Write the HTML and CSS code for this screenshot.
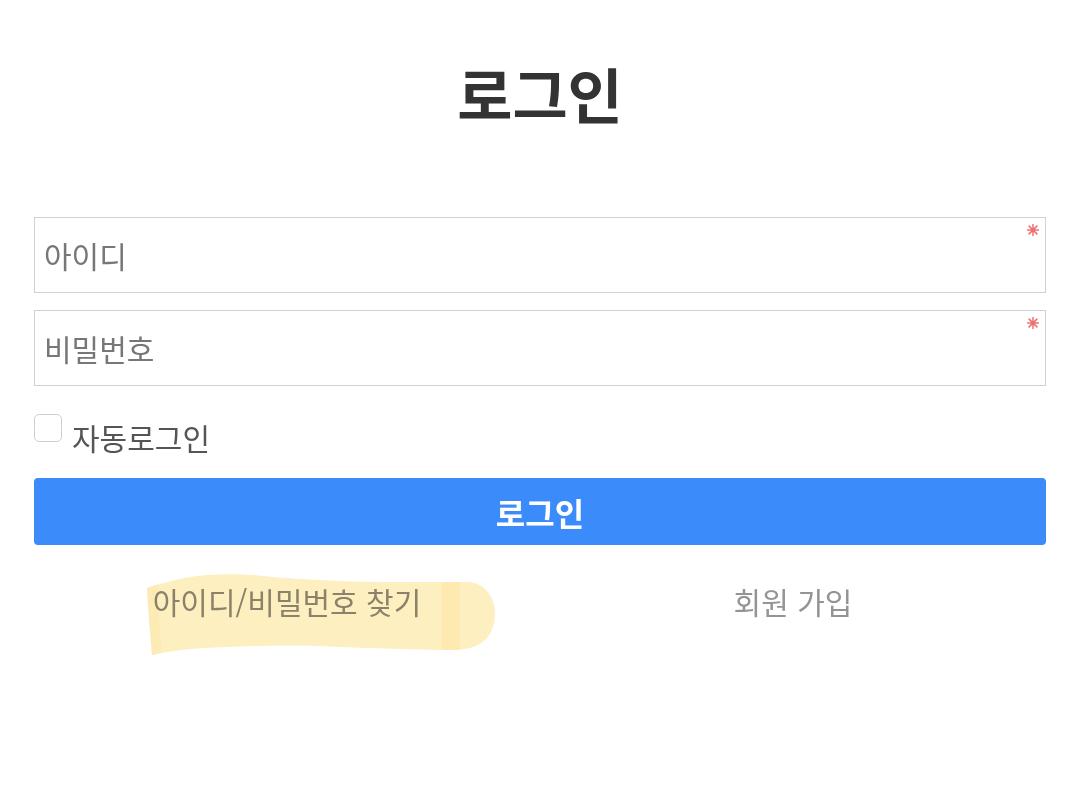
FILE: index.html
```html
<!DOCTYPE html>
<html lang="ko">
<head>
<meta charset="utf-8">
<title>로그인</title>
<link rel="stylesheet" href="styles.css">
</head>
<body>
<main class="login">
  <h1 class="login-title">로그인</h1>
  <form class="login-form">
    <div class="field">
      <input class="field-input" type="text" placeholder="아이디">
      <svg class="field-required" width="12" height="12" viewBox="0 0 12 12" aria-hidden="true">
        <path d="M6 0.5V11.5M0.5 6H11.5M2.1 2.1L9.9 9.9M9.9 2.1L2.1 9.9"/>
      </svg>
    </div>
    <div class="field">
      <input class="field-input" type="password" placeholder="비밀번호">
      <svg class="field-required" width="12" height="12" viewBox="0 0 12 12" aria-hidden="true">
        <path d="M6 0.5V11.5M0.5 6H11.5M2.1 2.1L9.9 9.9M9.9 2.1L2.1 9.9"/>
      </svg>
    </div>
    <label class="auto-login">
      <span class="checkbox"></span>
      <span class="auto-login-text">자동로그인</span>
    </label>
    <button class="login-button" type="button">로그인</button>
  </form>
  <nav class="links">
    <div class="link-cell">
      <svg class="highlight" width="360" height="90" viewBox="0 0 360 90" aria-hidden="true">
        <path class="hl-fill" d="M7 18 C20 14 40 7 67 5 C95 3 115 5 133 7 C160 9 200 12 250 12 C280 12 310 12 327 12 C345 12 355 28 355 43 C355 56 350 66 345 70 C335 79 325 80 300 80 C250 79 200 77 180 76 C140 75 110 76 67 78 C45 79 25 82 12 85 C10 60 8 40 7 18 Z"/>
        <path class="hl-fill2" d="M302 12 L320 12 L320 80 L302 80 Z"/>
        <path class="hl-fill3" d="M7 18 C10 16 14 15 18 14 C18 40 20 62 22 83 L12 85 C10 60 8 40 7 18 Z"/>
      </svg>
      <a class="link" href="#">아이디/비밀번호 찾기</a>
    </div>
    <div class="link-cell">
      <a class="link link-plain" href="#">회원 가입</a>
    </div>
  </nav>
</main>
</body>
</html>
```

FILE: styles.css
```css
* { box-sizing: border-box; }
html, body {
  margin: 0;
  padding: 0;
  background: #ffffff;
}
body {
  font-family: "Noto Sans CJK KR", "Noto Sans", sans-serif;
  width: 1080px;
  height: 796px;
  overflow: hidden;
}
.login {
  padding: 0 34px;
}
.login-title {
  margin: 0;
  padding-top: 49px;
  height: 217px;
  text-align: center;
  font-size: 60px;
  line-height: 88px;
  font-weight: 700;
  color: #333333;
}
.login-form {
  display: flex;
  flex-direction: column;
}
.field {
  position: relative;
  height: 76px;
  margin-bottom: 17px;
}
.field + .field { margin-bottom: 0; }
.field-input {
  width: 100%;
  height: 100%;
  border: 1px solid #d2d2d2;
  border-radius: 0;
  padding: 0 9px;
  font-family: inherit;
  font-size: 30px;
  color: #333;
  background: #fff;
  outline: none;
}
.field-input::placeholder {
  color: #777777;
}
.field-required {
  position: absolute;
  top: 7px;
  right: 7px;
  fill: none;
  stroke: #ee6f6f;
  stroke-width: 1.5;
  stroke-linecap: round;
}
.auto-login {
  display: flex;
  align-items: flex-start;
  gap: 10px;
  margin-top: 28px;
  height: 64px;
}
.checkbox {
  width: 28px;
  height: 28px;
  border: 1px solid #cfcfcf;
  border-radius: 5px;
  background: #fff;
  flex: none;
}
.auto-login-text {
  font-size: 30px;
  line-height: 30px;
  color: #555555;
  margin-top: 8px;
}
.login-button {
  height: 67px;
  width: 100%;
  border: none;
  border-radius: 4px;
  background: #3b8bfb;
  color: #ffffff;
  font-family: inherit;
  font-size: 32px;
  font-weight: 700;
  cursor: pointer;
}
.links {
  display: grid;
  grid-template-columns: 1fr 1fr;
  margin-top: 34px;
}
.link-cell {
  position: relative;
  text-align: center;
}
.link {
  position: relative;
  font-size: 30px;
  line-height: 44px;
  color: #8c8c8c;
  text-decoration: none;
}
.link-plain {
  color: #949494;
}
.highlight {
  position: absolute;
  left: 106px;
  top: -9px;
  mix-blend-mode: multiply;
  pointer-events: none;
  z-index: 1;
}
.hl-fill { fill: #feefc0; }
.hl-fill2 { fill: #fde3a0; opacity: 0.5; }
.hl-fill3 { fill: #fde6a8; opacity: 0.45; }
```
